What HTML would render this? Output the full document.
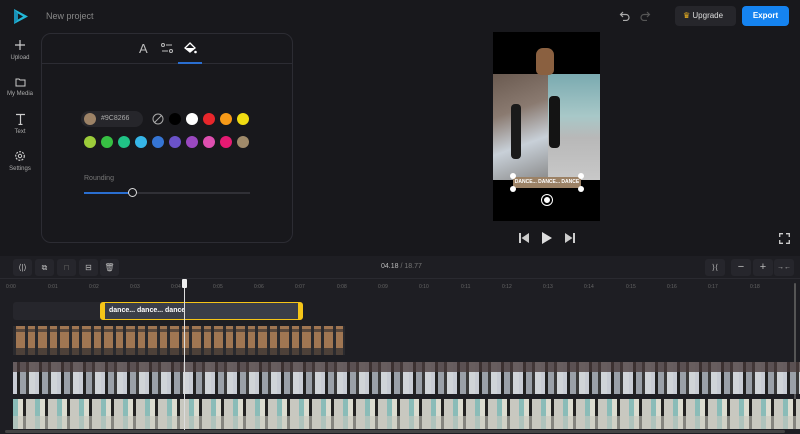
<!DOCTYPE html>
<html><head><meta charset="utf-8"><style>
*{margin:0;padding:0;box-sizing:border-box}
body{width:800px;height:434px;background:#18181c;font-family:"Liberation Sans",sans-serif;color:#ccc;position:relative;overflow:hidden}
.a{position:absolute}
.side{font-size:6px;color:#aaa;text-align:center;width:40px;line-height:8px}
.sw{position:absolute;width:12px;height:12px;border-radius:50%}
.tick{position:absolute;top:284px;font-size:5px;color:#666}
.btn{position:absolute;top:259px;width:19px;height:17px;background:#26262c;border-radius:3px;font-size:8px;color:#bbb;text-align:center;line-height:17px}
</style></head><body>
<svg class="a" style="left:13px;top:8px" width="16" height="17" viewBox="0 0 16 17"><path d="M1 1 L15 8.5 L1 16 Z" fill="#22b8d8"/><path d="M5 5.5 L10 8.5 L5 11.5Z" fill="#18181c"/><path d="M1 1 L5 5.5 L5 11.5 L1 16Z" fill="#1a8fb5"/></svg>
<div class="a" style="left:46px;top:11px;font-size:9px;color:#888">New project</div>
<div class="a side" style="left:0;top:39px"><svg width="12" height="12"><path d="M6 1v10M1 6h10" stroke="#ccc" stroke-width="1.2"/></svg><br>Upload</div>
<div class="a side" style="left:0;top:77px"><svg width="11" height="10" viewBox="0 0 11 10"><path d="M1 2h3l1 1h5v6H1z" fill="none" stroke="#ccc" stroke-width="1"/></svg><br>My Media</div>
<div class="a side" style="left:0;top:113px"><svg width="11" height="12"><path d="M1 1.5h9M5.5 1.5v10M3.5 11.5h4" stroke="#ccc" stroke-width="1.2" fill="none"/></svg><br>Text</div>
<div class="a side" style="left:0;top:150px"><svg width="12" height="12"><circle cx="6" cy="6" r="4.3" fill="none" stroke="#ccc" stroke-width="1.2" stroke-dasharray="2 1.2"/><circle cx="6" cy="6" r="1.7" fill="none" stroke="#ccc"/></svg><br>Settings</div>
<div class="a" style="left:41px;top:33px;width:252px;height:210px;border:1px solid #2c2c33;border-radius:10px;background:#18181c"></div>
<div class="a" style="left:41px;top:63px;width:252px;height:1px;background:#2c2c33"></div>
<div class="a" style="left:178px;top:62px;width:24px;height:2px;background:#2a6ed0"></div>
<div class="a" style="left:139px;top:41px;font-size:13px;color:#bbb">A</div>
<svg class="a" style="left:161px;top:43px" width="12" height="10"><circle cx="2" cy="2" r="1.5" fill="none" stroke="#bbb"/><line x1="5" y1="2" x2="11" y2="2" stroke="#bbb"/><line x1="1" y1="8" x2="7" y2="8" stroke="#bbb"/><circle cx="10" cy="8" r="1.5" fill="none" stroke="#bbb"/></svg>
<svg class="a" style="left:184px;top:42px" width="13" height="12"><path d="M6 1 L11 6 L6 10 L1 6Z" fill="none" stroke="#fff" stroke-width="1.3"/><path d="M2 6 L10 6 L6 10Z" fill="#fff"/><circle cx="11.5" cy="10" r="1.3" fill="#fff"/></svg>
<div class="a" style="left:81px;top:111px;width:62px;height:16px;border-radius:8px;background:#26262b"></div>
<div class="sw" style="left:84px;top:113px;background:#9c8266"></div>
<div class="a" style="left:101px;top:115px;font-size:7px;color:#aaa">#9C8266</div>
<svg class="a" style="left:152px;top:113px" width="12" height="12"><circle cx="6" cy="6" r="5" fill="none" stroke="#aaa"/><line x1="2.5" y1="9.5" x2="9.5" y2="2.5" stroke="#aaa"/></svg>
<div class="sw" style="left:169px;top:113px;background:#000"></div>
<div class="sw" style="left:186px;top:113px;background:#fff"></div>
<div class="sw" style="left:203px;top:113px;background:#e8262b"></div>
<div class="sw" style="left:220px;top:113px;background:#f79a18"></div>
<div class="sw" style="left:237px;top:113px;background:#f0dc12"></div>
<div class="sw" style="left:84px;top:136px;background:#9ccc3a"></div>
<div class="sw" style="left:101px;top:136px;background:#37c043"></div>
<div class="sw" style="left:118px;top:136px;background:#20c386"></div>
<div class="sw" style="left:135px;top:136px;background:#36b6e8"></div>
<div class="sw" style="left:152px;top:136px;background:#3575d4"></div>
<div class="sw" style="left:169px;top:136px;background:#6a52c8"></div>
<div class="sw" style="left:186px;top:136px;background:#9a48c0"></div>
<div class="sw" style="left:203px;top:136px;background:#de4fb0"></div>
<div class="sw" style="left:220px;top:136px;background:#e51a72"></div>
<div class="sw" style="left:237px;top:136px;background:#a08a6a"></div>
<div class="a" style="left:84px;top:175px;font-size:7px;color:#777">Rounding</div>
<div class="a" style="left:84px;top:192px;width:166px;height:2px;background:#303036"></div>
<div class="a" style="left:84px;top:192px;width:48px;height:2px;background:#2a6ed0"></div>
<div class="a" style="left:128px;top:188px;width:9px;height:9px;border-radius:50%;border:1.5px solid #ddd;background:#18181c"></div>
<svg class="a" style="left:619px;top:10px" width="12" height="11"><path d="M4 2 L1.5 4.5 L4 7 M1.5 4.5 H7 A3 3 0 0 1 7 10.5 H4" fill="none" stroke="#aaa" stroke-width="1.2"/></svg>
<svg class="a" style="left:639px;top:10px" width="12" height="11"><path d="M8 2 L10.5 4.5 L8 7 M10.5 4.5 H5 A3 3 0 0 0 5 10.5 H8" fill="none" stroke="#555" stroke-width="1.2"/></svg>
<div class="a" style="left:675px;top:6px;width:61px;height:20px;background:#26262b;border-radius:4px;font-size:8px;color:#ddd;line-height:20px;padding-left:8px"><span style="color:#f5b820">♛</span> Upgrade</div>
<div class="a" style="left:742px;top:6px;width:47px;height:20px;background:#1583f0;border-radius:4px;font-size:8px;color:#fff;line-height:20px;text-align:center;font-weight:bold">Export</div>
<!-- preview -->
<div class="a" style="left:493px;top:32px;width:107px;height:189px;background:#000"></div>
<div class="a" style="left:493px;top:74px;width:55px;height:106px;background:linear-gradient(160deg,#6a5a50 0%,#8a7a70 35%,#c8d0d8 65%,#8a8a8a 100%)"></div>
<div class="a" style="left:548px;top:74px;width:52px;height:106px;background:linear-gradient(180deg,#7aaab0 0%,#a8c8c8 40%,#b8b8b8 60%,#c8c8c8 100%)"></div>
<div class="a" style="left:511px;top:104px;width:10px;height:55px;background:#1a1a1a;border-radius:4px"></div>
<div class="a" style="left:549px;top:96px;width:11px;height:52px;background:#141414;border-radius:4px"></div>
<div class="a" style="left:536px;top:48px;width:18px;height:27px;background:#8a6040;border-radius:7px 7px 5px 5px"></div>
<div class="a" style="left:513px;top:177px;width:68px;height:11px;background:#9c8266;font-size:5px;color:#fff;font-weight:bold;text-align:center;line-height:11px;white-space:nowrap;overflow:hidden">DANCE... DANCE... DANCE</div>
<div class="a" style="left:510px;top:173px;width:6px;height:6px;border-radius:50%;background:#fff"></div>
<div class="a" style="left:578px;top:173px;width:6px;height:6px;border-radius:50%;background:#fff"></div>
<div class="a" style="left:510px;top:186px;width:6px;height:6px;border-radius:50%;background:#fff"></div>
<div class="a" style="left:578px;top:186px;width:6px;height:6px;border-radius:50%;background:#fff"></div>
<div class="a" style="left:542px;top:195px;width:10px;height:10px;border-radius:50%;background:#fff;border:2px solid #000;outline:1px solid #fff"></div>
<svg class="a" style="left:519px;top:233px" width="10" height="10"><rect x="0" y="0" width="2" height="10" fill="#ccc"/><path d="M10 0 L2.5 5 L10 10Z" fill="#ccc"/></svg>
<svg class="a" style="left:542px;top:232px" width="10" height="12"><path d="M0 0 L10 6 L0 12Z" fill="#ddd"/></svg>
<svg class="a" style="left:565px;top:233px" width="10" height="10"><path d="M0 0 L7.5 5 L0 10Z" fill="#ccc"/><rect x="8" y="0" width="2" height="10" fill="#ccc"/></svg>
<svg class="a" style="left:779px;top:233px" width="11" height="11"><path d="M0.7 4V0.7H4M7 0.7H10.3V4M10.3 7V10.3H7M4 10.3H0.7V7" fill="none" stroke="#ccc" stroke-width="1.3"/></svg>
<!-- timeline -->
<div class="a" style="left:0;top:256px;width:800px;height:178px;background:#1e1e23"></div>
<div class="a" style="left:0;top:278px;width:800px;height:1px;background:#2a2a30"></div>
<div class="btn" style="left:13px">⟨|⟩</div><div class="btn" style="left:35px">⧉</div><div class="btn" style="left:57px;color:#555">⊓</div><div class="btn" style="left:79px">⊟</div><div class="btn" style="left:100px">🗑</div>
<div class="a" style="left:381px;top:263px;font-size:7px;color:#bbb">04.18 <span style="color:#777">/ 18.77</span></div>
<div class="btn" style="left:705px;width:20px">⟩⟨</div><div class="btn" style="left:731px;width:20px;font-size:11px">−</div><div class="btn" style="left:753px;width:20px;font-size:11px">+</div><div class="btn" style="left:774px;width:20px;font-size:7px">→←</div>
<div class="tick" style="left:6px">0:00</div><div class="tick" style="left:48px">0:01</div><div class="tick" style="left:89px">0:02</div><div class="tick" style="left:130px">0:03</div><div class="tick" style="left:171px">0:04</div><div class="tick" style="left:213px">0:05</div><div class="tick" style="left:254px">0:06</div><div class="tick" style="left:295px">0:07</div><div class="tick" style="left:337px">0:08</div><div class="tick" style="left:378px">0:09</div><div class="tick" style="left:419px">0:10</div><div class="tick" style="left:461px">0:11</div><div class="tick" style="left:502px">0:12</div><div class="tick" style="left:543px">0:13</div><div class="tick" style="left:584px">0:14</div><div class="tick" style="left:626px">0:15</div><div class="tick" style="left:667px">0:16</div><div class="tick" style="left:708px">0:17</div><div class="tick" style="left:750px">0:18</div>
<div class="a" style="left:794px;top:283px;width:2px;height:140px;background:#555;border-radius:1px"></div>
<div class="a" style="left:13px;top:302px;width:290px;height:18px;background:#26262c;border-radius:3px"></div>
<div class="a" style="left:100px;top:302px;width:203px;height:18px;background:#3a3e48;border:1.5px solid #f5c518;border-left:5px solid #f5c518;border-right:5px solid #f5c518;border-radius:3px;font-size:7px;color:#fff;font-weight:bold;line-height:15px;padding-left:4px">dance... dance... dance</div>
<div class="a" style="left:13px;top:326px;width:332px;height:29px;background:repeating-linear-gradient(90deg,#2a2a2e 0 3px,#a07652 3px 12px,#2a2a2e 12px 15px,#a07652 15px 22px)"></div>
<div class="a" style="left:13px;top:326px;width:332px;height:29px;background:repeating-linear-gradient(180deg,transparent 0 3px,rgba(42,42,46,.6) 3px 6px,transparent 6px 22px,rgba(42,42,46,.7) 22px 29px)"></div>
<div class="a" style="left:13px;top:362px;width:787px;height:32px;background:repeating-linear-gradient(90deg,#c8ccd4 0 4px,#222 4px 7px,#9aa0a8 7px 13px,#3a3a3a 13px 16px,#d0d4d8 16px 22px)"></div>
<div class="a" style="left:13px;top:362px;width:787px;height:10px;background:rgba(70,55,55,.75)"></div>
<div class="a" style="left:13px;top:399px;width:787px;height:30px;background:repeating-linear-gradient(90deg,#8abcb8 0 5px,#dcdcd0 5px 10px,#222 10px 13px,#c8c8c0 13px 22px)"></div>
<div class="a" style="left:13px;top:416px;width:787px;height:13px;background:rgba(200,200,190,.6)"></div>
<div class="a" style="left:5px;top:430px;width:780px;height:3px;background:#444;border-radius:2px"></div>
<div class="a" style="left:184px;top:282px;width:1px;height:148px;background:#ddd"></div>
<div class="a" style="left:182px;top:279px;width:5px;height:9px;background:#eee;border-radius:1px"></div>
</body></html>
